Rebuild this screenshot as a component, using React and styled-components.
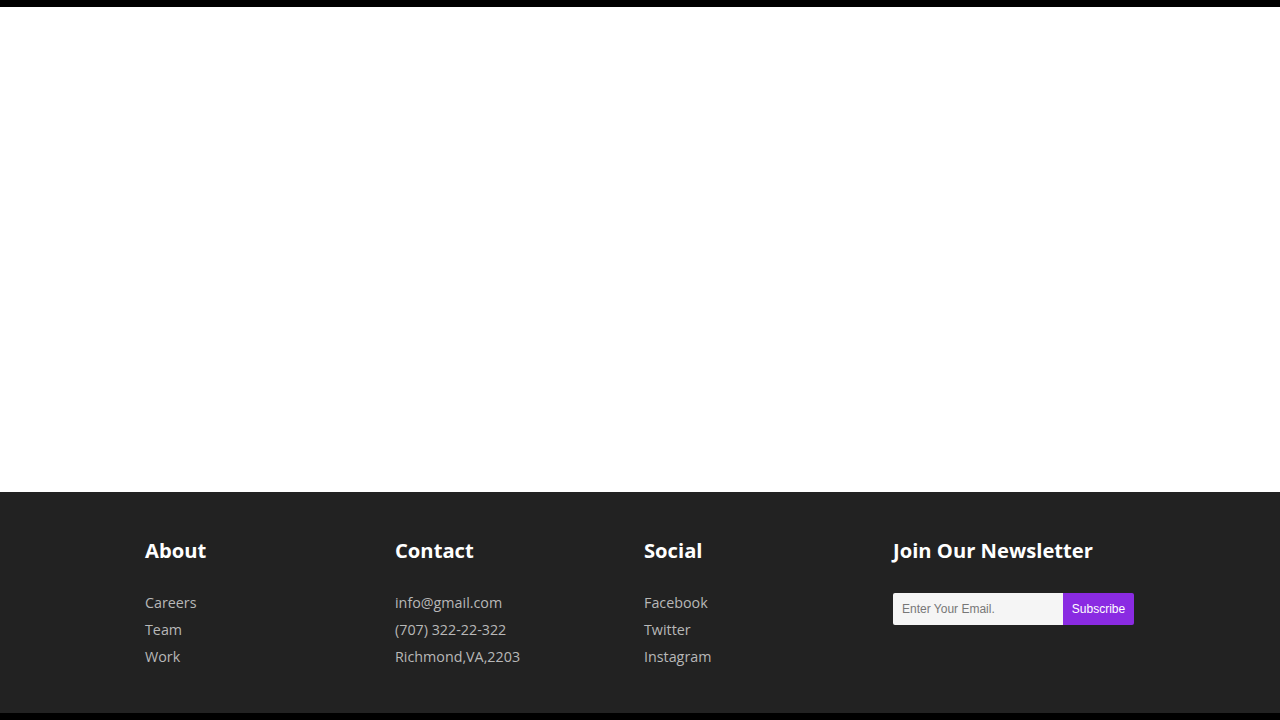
import React from "react";
import styled, { createGlobalStyle } from "styled-components";

const GlobalStyle = createGlobalStyle`
  html, body {
    margin: 0;
    padding: 0;
    background: #000;
  }
  body {
    font-family: "Open Sans", "Liberation Sans", sans-serif;
  }
`;

const Page = styled.div`
  width: 1280px;
  height: 720px;
  display: flex;
  flex-direction: column;
  background: #000;
  padding: 7px 0;
  box-sizing: border-box;
`;

const Hero = styled.main`
  height: 485px;
  background: #fff;
`;

const Footer = styled.footer`
  flex: 1;
  background: #222222;
  padding: 46px 0 0 145px;
  box-sizing: border-box;
`;

const Columns = styled.div`
  display: grid;
  grid-template-columns: 250px 249px 249px 249px;
`;

const Column = styled.div`
  display: flex;
  flex-direction: column;
`;

const Heading = styled.h4`
  margin: 0 0 27px;
  font-size: 20.2px;
  line-height: 24px;
  font-weight: 700;
  color: #fff;
`;

const Link = styled.a`
  font-size: 14.3px;
  line-height: 27px;
  color: #b8b8b8;
  text-decoration: none;
`;

const Form = styled.form`
  display: flex;
  margin-top: 4px;
`;

const EmailInput = styled.input`
  width: 170px;
  height: 32px;
  box-sizing: border-box;
  border: none;
  border-radius: 2px 0 0 2px;
  background: #f5f5f5;
  padding: 0 9px;
  font-family: "Liberation Sans", Arial, sans-serif;
  font-size: 12px;
  color: #333;
  outline: none;
  &::placeholder {
    color: #777;
  }
`;

const SubscribeButton = styled.button`
  width: 71px;
  height: 32px;
  border: none;
  border-radius: 0 2px 2px 0;
  background: #8a2be2;
  color: #fff;
  font-family: "Liberation Sans", Arial, sans-serif;
  font-size: 12px;
  padding: 0;
  cursor: pointer;
`;

const columns = [
  { title: "About", links: ["Careers", "Team", "Work"] },
  { title: "Contact", links: ["info@gmail.com", "(707) 322-22-322", "Richmond,VA,2203"] },
  { title: "Social", links: ["Facebook", "Twitter", "Instagram"] },
];

export default function App() {
  return (
    <>
      <GlobalStyle />
      <Page>
        <Hero />
        <Footer>
          <Columns>
            {columns.map((col) => (
              <Column key={col.title}>
                <Heading>{col.title}</Heading>
                {col.links.map((l) => (
                  <Link key={l} href="#">{l}</Link>
                ))}
              </Column>
            ))}
            <Column>
              <Heading>Join Our Newsletter</Heading>
              <Form onSubmit={(e) => e.preventDefault()}>
                <EmailInput type="email" placeholder="Enter Your Email." />
                <SubscribeButton type="submit">Subscribe</SubscribeButton>
              </Form>
            </Column>
          </Columns>
        </Footer>
      </Page>
    </>
  );
}
